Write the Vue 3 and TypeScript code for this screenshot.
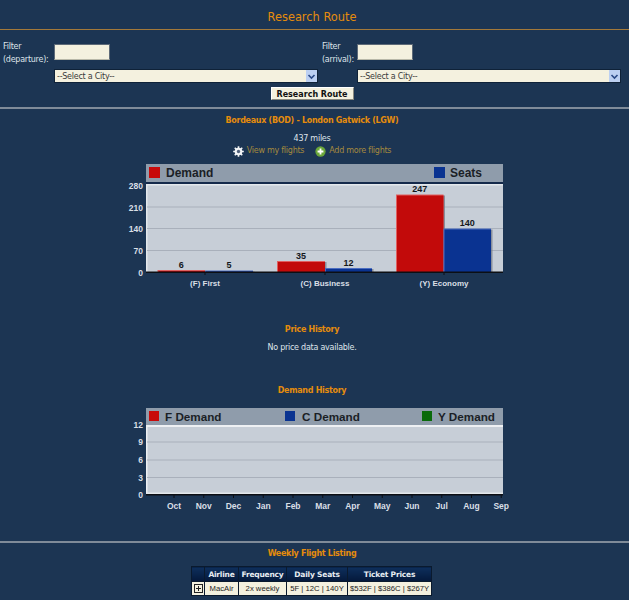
<script setup lang="ts">
const yTicks1 = [
  { label: '280', y: 22 },
  { label: '210', y: 44 },
  { label: '140', y: 65.5 },
  { label: '70', y: 87.5 },
  { label: '0', y: 109 },
]
const bars = [
  { x: 12.5, w: 47.5, v: 6, y: 107, fill: '#c20a0a', edge: '#e06060' },
  { x: 60, w: 48, v: 5, y: 107.5, fill: '#0a3391', edge: '#4a6cc0' },
  { x: 132, w: 48, v: 35, y: 98, fill: '#c20a0a', edge: '#e06060' },
  { x: 180, w: 47, v: 12, y: 105, fill: '#0a3391', edge: '#4a6cc0' },
  { x: 251, w: 47.5, v: 247, y: 31.5, fill: '#c20a0a', edge: '#e06060' },
  { x: 298.5, w: 47.5, v: 140, y: 65.5, fill: '#0a3391', edge: '#4a6cc0' },
]
const cats = [
  { label: '(F) First', x: 60 },
  { label: '(C) Business', x: 180 },
  { label: '(Y) Economy', x: 299 },
]
const months = ['Oct', 'Nov', 'Dec', 'Jan', 'Feb', 'Mar', 'Apr', 'May', 'Jun', 'Jul', 'Aug', 'Sep']
const monthX = months.map((_, i) => 29 + i * 29.75)
const yTicks2 = [
  { label: '12', y: 18 },
  { label: '9', y: 35 },
  { label: '6', y: 53 },
  { label: '3', y: 70.5 },
  { label: '0', y: 88 },
]
</script>

<template>
  <div class="page">
    <h1 class="title">Research Route</h1>
    <hr class="rule-orange" />

    <form class="search" @submit.prevent>
      <div class="side">
        <label class="filter-label">Filter<br />(departure):</label>
        <input class="filter-input" type="text" />
        <div class="select-wrap select-left">
          <select class="city"><option>--Select a City--</option></select>
          <span class="arrow">
            <svg width="11" height="11" viewBox="0 0 11 11"><path d="M2.5 4 L5.5 7 L8.5 4" fill="none" stroke="#2b4a86" stroke-width="1.6" /></svg>
          </span>
        </div>
      </div>
      <div class="side side-right">
        <label class="filter-label">Filter<br />(arrival):</label>
        <input class="filter-input" type="text" />
        <div class="select-wrap select-right">
          <select class="city"><option>--Select a City--</option></select>
          <span class="arrow">
            <svg width="11" height="11" viewBox="0 0 11 11"><path d="M2.5 4 L5.5 7 L8.5 4" fill="none" stroke="#2b4a86" stroke-width="1.6" /></svg>
          </span>
        </div>
      </div>
      <div class="submit-row"><button class="submit" type="submit">Research Route</button></div>
    </form>
    <hr class="rule-grey" />

    <h2 class="heading route">Bordeaux (BOD) - London Gatwick (LGW)</h2>
    <p class="miles">437 miles</p>
    <div class="links">
      <a class="link">
        <svg width="11" height="11" viewBox="0 0 12 12">
          <circle cx="6" cy="6" r="4.2" fill="#f2f4f6" />
          <g stroke="#f2f4f6" stroke-width="1.8">
            <path d="M6 0.2V11.8M0.2 6H11.8M1.9 1.9L10.1 10.1M10.1 1.9L1.9 10.1" />
          </g>
          <circle cx="6" cy="6" r="1.8" fill="#50607a" />
        </svg>
        View my flights
      </a>
      <a class="link">
        <svg width="11" height="11" viewBox="0 0 12 12">
          <circle cx="6" cy="6" r="5.6" fill="#6aa63a" />
          <path d="M6 2.8V9.2M2.8 6H9.2" stroke="#fff" stroke-width="2" />
        </svg>
        Add more flights
      </a>
    </div>

    <svg class="chart chart-one" width="624" height="132" viewBox="-145 0 624 132">
      <rect x="1" y="1" width="357" height="19" fill="#8f9cab" />
      <rect x="1" y="19" width="357" height="2" fill="#14294a" />
      <rect x="1" y="21" width="357" height="88" fill="#c7ced7" />
      <rect x="1" y="21" width="1.5" height="88" fill="#e4e8ec" />
      <rect x="1" y="21" width="357" height="1.5" fill="#e4e8ec" />
      <line v-for="t in yTicks1.slice(1, 4)" :key="t.label" x1="2" x2="358" :y1="t.y" :y2="t.y" stroke="#a9b0bb" stroke-width="1" />
      <rect x="4" y="4" width="11" height="11" fill="#c80a0a" />
      <text x="21" y="14" class="legend legend-one">Demand</text>
      <rect x="289" y="4" width="11" height="11" fill="#0a3391" />
      <text x="305" y="14" class="legend legend-one">Seats</text>

      <g v-for="b in bars" :key="b.x">
        <rect :x="b.x + 1.5" :y="b.y + 1" :width="b.w" :height="109 - b.y - 1" fill="#6e7684" opacity="0.7" />
        <rect :x="b.x" :y="b.y" :width="b.w" :height="109 - b.y" :fill="b.edge" />
        <rect :x="b.x + 1" :y="b.y + 1" :width="b.w - 1" :height="108 - b.y" :fill="b.fill" />
        <text :x="b.x + b.w / 2" :y="b.y - 2.5" text-anchor="middle" class="value">{{ b.v }}</text>
      </g>

      <rect x="1" y="108.5" width="357" height="1.5" fill="#0c0f14" />
      <line v-for="c in cats" :key="c.x" :x1="c.x" :x2="c.x" y1="109" y2="112" stroke="#0c0f14" />
      <text v-for="t in yTicks1" :key="t.label" x="-2" :y="t.y + 3.5" text-anchor="end" class="axis">{{ t.label }}</text>
      <text v-for="c in cats" :key="c.label" :x="c.x" y="123" text-anchor="middle" class="axis axis-cat">{{ c.label }}</text>
    </svg>

    <h2 class="heading price">Price History</h2>
    <p class="none">No price data available.</p>
    <h2 class="heading history">Demand History</h2>

    <svg class="chart chart-two" width="624" height="112" viewBox="-145 0 624 112">
      <rect x="1" y="1" width="357" height="17" fill="#8f9cab" />
      <rect x="1" y="18" width="357" height="70" fill="#c7ced7" />
      <rect x="1" y="18" width="357" height="2" fill="#eef0f3" />
      <rect x="1" y="18" width="1.5" height="70" fill="#eef0f3" />
      <rect x="1" y="85.5" width="357" height="1.5" fill="#e4e8ec" />
      <line v-for="t in yTicks2.slice(1, 4)" :key="t.label" x1="2" x2="358" :y1="t.y" :y2="t.y" stroke="#a9b0bb" stroke-width="1.2" />
      <rect x="4" y="4" width="10" height="10" fill="#c80a0a" />
      <text x="20" y="14" class="legend">F Demand</text>
      <rect x="140" y="4" width="10" height="10" fill="#0a3391" />
      <text x="157" y="14" class="legend">C Demand</text>
      <rect x="277" y="4" width="10" height="10" fill="#0a6a0a" />
      <text x="293" y="14" class="legend">Y Demand</text>
      <rect x="1" y="87" width="357" height="1.5" fill="#0c0f14" />
      <line v-for="x in monthX" :key="x" :x1="x" :x2="x" y1="88" y2="91" stroke="#0c0f14" />
      <text v-for="t in yTicks2" :key="t.label" x="-2" :y="t.y + 3" text-anchor="end" class="axis">{{ t.label }}</text>
      <text v-for="(m, i) in months" :key="m" :x="monthX[i]" y="102" text-anchor="middle" class="axis">{{ m }}</text>
    </svg>

    <hr class="rule-grey rule-bottom" />
    <h2 class="heading weekly">Weekly Flight Listing</h2>
    <table class="flights">
      <thead>
        <tr>
          <th class="c1"></th>
          <th class="c2">Airline</th>
          <th class="c3">Frequency</th>
          <th class="c4">Daily Seats</th>
          <th class="c5">Ticket Prices</th>
        </tr>
      </thead>
      <tbody>
        <tr>
          <td class="expand">
            <svg width="9" height="9" viewBox="0 0 9 9"><rect x="0.5" y="0.5" width="8" height="8" fill="none" stroke="#222" /><path d="M4.5 2V7M2 4.5H7" stroke="#222" /></svg>
          </td>
          <td>MacAir</td>
          <td>2x weekly</td>
          <td>5F | 12C | 140Y</td>
          <td>$532F | $386C | $267Y</td>
        </tr>
      </tbody>
    </table>
  </div>
</template>

<style>
html, body { background: #1c3553; margin: 0; }
</style>

<style scoped>
.page {
  width: 624px;
  padding-right: 5px;
  height: 600px;
  overflow: hidden;
  background: #1c3553;
  font-family: "DejaVu Sans", Verdana, sans-serif;
  font-size: 8px;
  letter-spacing: -0.25px;
  color: #dfe4ea;
}
.title {
  margin: 0;
  padding-top: 10px;
  height: 19px;
  box-sizing: content-box;
  text-align: center;
  font-size: 11.4px;
  letter-spacing: 0;
  line-height: 15px;
  font-weight: normal;
  color: #e58c0c;
}
hr { margin: 0; border: 0; width: 629px; }
.rule-orange { height: 1px; background: #a3793a; }
.rule-grey { height: 2px; background: #7f8b99; }
.search {
  height: 77px;
  display: grid;
  grid-template-columns: 319px 310px;
  grid-template-rows: 57px 20px;
}
.side {
  display: grid;
  grid-template-columns: 51px 56px;
  grid-template-rows: 29px 14px;
  padding: 10px 0 0 3px;
  align-content: start;
}
.side-right {
  grid-template-columns: 35px 56px;
  padding-left: 3px;
}
.filter-label { line-height: 13px; }
.filter-input {
  width: 56px;
  height: 16px;
  margin-top: 4px;
  box-sizing: border-box;
  border: 1px solid #5d6a78;
  border-bottom-color: #b8b8a8;
  background: #f4f1df;
  padding: 0 2px;
}
.select-wrap {
  position: relative;
  grid-row: 2;
  grid-column: 2;
  height: 14px;
}
.select-left { width: 264px; }
.select-right { width: 264px; }
.city {
  appearance: none;
  display: block;
  width: 100%;
  height: 14px;
  box-sizing: border-box;
  border: 1px solid #0f2238;
  border-radius: 0;
  padding: 0 2px;
  background: #f4f1df;
  font-family: "DejaVu Sans", Verdana, sans-serif;
  font-size: 8px;
  letter-spacing: -0.25px;
  color: #3a3a3a;
}
.arrow {
  position: absolute;
  right: 1px;
  top: 1px;
  width: 11px;
  height: 12px;
  background: #bcd0f2;
  display: flex;
  align-items: center;
  justify-content: center;
}
.submit-row {
  grid-column: 1 / -1;
  width: 624px;
  display: flex;
  justify-content: center;
}
.submit {
  width: 83px;
  height: 13px;
  padding: 2px 0 0;
  overflow: hidden;
  border: 1px solid #fff;
  border-right-color: #8a8a80;
  border-bottom-color: #8a8a80;
  background: #f4f1df;
  color: #111;
  font-family: "DejaVu Sans", Verdana, sans-serif;
  font-size: 8px;
  font-weight: bold;
  line-height: 10px;
}
.heading {
  margin: 0;
  text-align: center;
  font-size: 8px;
  letter-spacing: -0.3px;
  line-height: 12px;
  font-weight: bold;
  color: #e58c0c;
}
.route { margin-top: 6px; }
.miles { margin: 6px 0 0; text-align: center; line-height: 12px; }
.none { margin: 6px 0 0; text-align: center; line-height: 12px; }
.links {
  display: flex;
  justify-content: center;
  gap: 11px;
  margin-top: 0;
  height: 12px;
  line-height: 12px;
}
.link {
  display: flex;
  align-items: center;
  gap: 3px;
  color: #a68a3e;
}
.chart { display: block; }
.chart-one { margin-top: 6px; }
.legend {
  font-family: "Liberation Sans", Arial, sans-serif;
  font-size: 11.7px;
  font-weight: bold;
  letter-spacing: 0;
  fill: #1b1f26;
}
.legend-one { font-size: 12px; }
.value {
  font-family: "Liberation Sans", Arial, sans-serif;
  font-size: 9px;
  font-weight: bold;
  letter-spacing: 0;
  fill: #14171c;
}
.axis {
  font-family: "Liberation Sans", Arial, sans-serif;
  font-size: 8.5px;
  font-weight: bold;
  letter-spacing: 0;
  fill: #d9dfe6;
}
.axis-cat { font-size: 8px; }
.price { margin-top: 29px; }
.history { margin-top: 31px; }
.chart-two { margin-top: 10px; }
.rule-bottom { margin-top: 22px; }
.weekly { margin-top: 5px; }
.flights {
  margin: 6px 0 0 191px;
  width: 241px;
  table-layout: fixed;
  border-collapse: collapse;
}
.flights th {
  height: 14px;
  padding: 0;
  border: 1px solid #0a1a2e;
  background: linear-gradient(#0e2f5c, #04183a);
  color: #e8edf2;
  font-size: 7.5px;
  letter-spacing: -0.2px;
  font-weight: bold;
  line-height: 13px;
}
.flights td {
  height: 13px;
  padding: 0;
  border: 1px solid #0a1a2e;
  background: #f4f1df;
  color: #1d1d1d;
  text-align: center;
  font-family: "Liberation Sans", Arial, sans-serif;
  font-size: 7.7px;
  letter-spacing: 0;
  line-height: 12px;
  white-space: nowrap;
}
.flights td.expand svg { display: block; margin: 0 auto; }
.c1 { width: 12px; }
.c2 { width: 33px; }
.c3 { width: 47px; }
.c4 { width: 60px; }
.c5 { width: 83px; }
</style>
